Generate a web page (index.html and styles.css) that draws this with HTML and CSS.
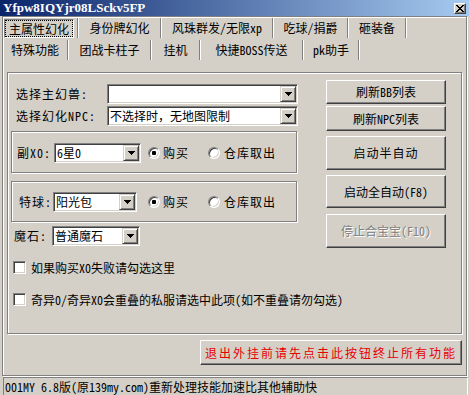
FILE: index.html
```html
<!DOCTYPE html>
<html>
<head>
<meta charset="utf-8">
<link rel="stylesheet" href="styles.css">
</head>
<body>
<div class="win">
  <div class="titlebar">
    <span class="title">Yfpw8IQYjr08LSckv5FP</span>
    <span class="close"><svg width="8" height="7" viewBox="0 0 8 7" shape-rendering="crispEdges"><path d="M0 0h2v1h-2zM6 0h2v1h-2zM1 1h2v1h-2zM5 1h2v1h-2zM2 2h4v1h-4zM3 3h2v1h-2zM2 4h4v1h-4zM1 5h2v1h-2zM5 5h2v1h-2zM0 6h2v1h-2zM6 6h2v1h-2z" fill="#000"/></svg></span>
  </div>
  <div class="frame">
    <div class="tabs">
      <div class="tabrow">
        <div class="tab t74 sel"><span class="pressed"><span class="focus">主属性幻化</span></span></div><i class="sep"></i>
        <div class="tab t81">身份牌幻化</div><i class="sep"></i>
        <div class="tab t110">风珠群发/无限xp</div><i class="sep"></i>
        <div class="tab t73">吃球/捐爵</div><i class="sep"></i>
        <div class="tab t56">砸装备</div><i class="sep"></i>
      </div>
      <div class="tabrow">
        <div class="tab t64">特殊功能</div><i class="sep"></i>
        <div class="tab t81">团战卡柱子</div><i class="sep"></i>
        <div class="tab t47">挂机</div><i class="sep"></i>
        <div class="tab t101">快捷BOSS传送</div><i class="sep"></i>
        <div class="tab t54">pk助手</div><i class="sep"></i>
      </div>
    </div>

    <div class="panel">
      <div class="leftcol">
        <div class="row rowa">
          <span class="lbl la">选择主幻兽:</span>
          <div class="combo cw191"><span class="val"></span><span class="drop"><svg width="7" height="4" viewBox="0 0 7 4" shape-rendering="crispEdges"><path d="M0 0h7v1h-7zM1 1h5v1h-5zM2 2h3v1h-3zM3 3h1v1h-1z" fill="#000"/></svg></span></div>
        </div>
        <div class="row rowb">
          <span class="lbl la">选择幻化NPC:</span>
          <div class="combo cw191"><span class="val">不选择时，无地图限制</span><span class="drop"><svg width="7" height="4" viewBox="0 0 7 4" shape-rendering="crispEdges"><path d="M0 0h7v1h-7zM1 1h5v1h-5zM2 2h3v1h-3zM3 3h1v1h-1z" fill="#000"/></svg></span></div>
        </div>

        <div class="group g1">
          <span class="lbl lx">副X0:</span>
          <div class="combo cw87"><span class="val">6星0</span><span class="drop"><svg width="7" height="4" viewBox="0 0 7 4" shape-rendering="crispEdges"><path d="M0 0h7v1h-7zM1 1h5v1h-5zM2 2h3v1h-3zM3 3h1v1h-1z" fill="#000"/></svg></span></div>
          <div class="radios r1">
            <span class="ritem rfirst"><i class="radio on"></i><span class="rl">购买</span></span>
            <span class="ritem"><i class="radio"></i><span class="rl rl2">仓库取出</span></span>
          </div>
        </div>

        <div class="group g2">
          <span class="lbl lt">特球:</span>
          <div class="combo cw84"><span class="val">阳光包</span><span class="drop"><svg width="7" height="4" viewBox="0 0 7 4" shape-rendering="crispEdges"><path d="M0 0h7v1h-7zM1 1h5v1h-5zM2 2h3v1h-3zM3 3h1v1h-1z" fill="#000"/></svg></span></div>
          <div class="radios r2">
            <span class="ritem rfirst"><i class="radio on"></i><span class="rl">购买</span></span>
            <span class="ritem"><i class="radio"></i><span class="rl rl2">仓库取出</span></span>
          </div>
        </div>

        <div class="row rowm">
          <span class="lbl lm">魔石:</span>
          <div class="combo cw88"><span class="val">普通魔石</span><span class="drop"><svg width="7" height="4" viewBox="0 0 7 4" shape-rendering="crispEdges"><path d="M0 0h7v1h-7zM1 1h5v1h-5zM2 2h3v1h-3zM3 3h1v1h-1z" fill="#000"/></svg></span></div>
        </div>

        <div class="crow c1"><i class="check"></i><span class="cl">如果购买X0失败请勾选这里</span></div>
        <div class="crow c2"><i class="check"></i><span class="cl">奇异0/奇异X0会重叠的私服请选中此项(如不重叠请勿勾选)</span></div>
      </div>

      <div class="rightcol">
        <div class="btn b1">刷新BB列表</div>
        <div class="btn b2">刷新NPC列表</div>
        <div class="btn b3 sp">启动半自动</div>
        <div class="btn b4">启动全自动(F8)</div>
        <div class="btn b5 disabled">停止合宝宝(F10)</div>
      </div>
    </div>

    <div class="btn quit">退出外挂前请先点击此按钮终止所有功能</div>
  </div>
  <div class="status">001MY 6.8版(原139my.com)重新处理技能加速比其他辅助快</div>
</div>
</body>
</html>
```

FILE: styles.css
```css
* { box-sizing: border-box; margin: 0; padding: 0; }
html, body { width: 469px; height: 395px; overflow: hidden; }
body {
  background: #d4d0c8;
  font-family: "Noto Sans Mono CJK SC", "Noto Sans CJK SC", sans-serif;
  font-size: 12px;
  line-height: 16px;
  color: #000;
}
.win { width: 469px; height: 395px; display: flex; flex-direction: column; }

.titlebar {
  height: 16px;
  flex: none;
  background: linear-gradient(to right, #0a246a, #a6caf0);
  display: flex;
  align-items: center;
  justify-content: space-between;
  padding: 0 3px 0 3px;
}
.title {
  font-family: "Liberation Serif", serif;
  font-weight: bold;
  font-size: 13px;
  line-height: 16px;
  color: #fff;
}
.close {
  width: 12px;
  height: 11px;
  margin-top: 1px;
  background: #d4d0c8;
  border: 1px solid;
  border-color: #fff #404040 #404040 #fff;
  box-shadow: inset -1px -1px #808080;
  display: flex;
  align-items: center;
  justify-content: center;
}

.frame {
  flex: none;
  width: 465px;
  height: 360px;
  margin-left: 2px;
  border: 1px solid #808080;
  box-shadow: inset 1px 1px #fff, 1px 1px 0 #fff;
}

.tabs { padding-top: 1px; display: flex; flex-direction: column; gap: 2px; }
.tabrow { display: flex; height: 20px; }
.tab { height: 20px; display: flex; align-items: center; justify-content: center; white-space: nowrap; }
.tab.sel { justify-content: flex-start; align-items: flex-start; }
.pressed {
  margin: 1px 0 0 1px;
  width: 70px;
  height: 19px;
  border: 1px solid;
  border-color: #808080 #fff #fff #808080;
  display: flex;
}
.focus {
  flex: 1;
  border: 1px dotted #000;
  display: flex;
  align-items: center;
  justify-content: center;
}
.sep { display: block; width: 2px; height: 20px; border-left: 1px solid #808080; border-right: 1px solid #fff; }
.t74 { width: 74px; } .t81 { width: 81px; } .t110 { width: 110px; } .t73 { width: 73px; } .t56 { width: 56px; }
.t64 { width: 64px; } .t47 { width: 47px; } .t101 { width: 101px; } .t54 { width: 54px; }

.panel {
  margin: 12px 0 0 4px;
  width: 455px;
  height: 262px;
  border: 1px solid #808080;
  box-shadow: inset 1px 1px #fff, 1px 1px 0 #fff;
  display: flex;
  align-items: flex-start;
  padding: 7px 0 0 3px;
}
.leftcol { width: 287px; margin-top: 4px; display: flex; flex-direction: column; align-items: flex-start; }
.rightcol { margin-left: 28px; display: flex; flex-direction: column; }

.row { display: flex; align-items: center; height: 20px; }
.rowb { margin-top: 2px; }
.lbl { letter-spacing: 1px; white-space: nowrap; }
.la { padding-left: 5px; width: 96px; }
.lx { padding-left: 5px; width: 42px; }
.lt { padding-left: 7px; width: 41px; }
.lm { padding-left: 3px; width: 41px; }

.combo {
  height: 20px;
  background: #fff;
  border: 1px solid;
  border-color: #808080 #fff #fff #808080;
  box-shadow: inset 1px 1px #404040, inset -1px -1px #d4d0c8;
  padding: 1px;
  display: flex;
}
.cw191 { width: 191px; } .cw87 { width: 87px; } .cw84 { width: 84px; } .cw88 { width: 88px; }
.val { flex: 1; padding-left: 1px; white-space: nowrap; overflow: hidden; line-height: 16px; }
.drop {
  width: 16px;
  height: 16px;
  background: #d4d0c8;
  border: 1px solid;
  border-color: #d4d0c8 #404040 #404040 #d4d0c8;
  box-shadow: inset 1px 1px #fff, inset -1px -1px #808080;
  display: flex;
  align-items: center;
  justify-content: center;
}

.group {
  width: 286px;
  border: 1px solid #808080;
  box-shadow: inset 1px 1px #fff, 1px 1px 0 #fff;
  display: flex;
  align-items: center;
  align-self: flex-start;
}
.g1 { margin-top: 5px; height: 42px; padding-top: 1px; }
.g2 { margin-top: 8px; height: 41px; padding-top: 1px; }
.radios { display: flex; align-items: center; }
.r1 { margin-left: 7px; }
.r2 { margin-left: 11px; }
.ritem { display: flex; align-items: center; }
.rfirst { width: 60px; }
.radio {
  display: flex;
  align-items: center;
  justify-content: center;
  width: 12px;
  height: 12px;
  border-radius: 50%;
  background: #fff;
  border: 1px solid;
  border-color: #808080 #fff #fff #808080;
  box-shadow: inset 1px 1px #404040, inset -1px -1px #d4d0c8;
}
.radio.on::after { content: ""; width: 4px; height: 4px; background: #000; border-radius: 1px; }
.rl { margin-left: 3px; letter-spacing: 1px; }
.rl2 { margin-left: 4px; }

.rowm { margin-top: 4px; }

.crow { display: flex; align-items: center; padding-left: 2px; height: 13px; }
.c1 { margin-top: 15px; }
.c2 { margin-top: 19px; }
.check {
  display: block;
  width: 13px;
  height: 13px;
  background: #fff;
  border: 1px solid;
  border-color: #808080 #fff #fff #808080;
  box-shadow: inset 1px 1px #404040, inset -1px -1px #d4d0c8;
}
.cl { margin-left: 5px; white-space: nowrap; }

.btn {
  width: 120px;
  background: #d4d0c8;
  border: 1px solid;
  border-color: #fff #404040 #404040 #fff;
  box-shadow: inset -1px -1px #808080;
  display: flex;
  align-items: center;
  justify-content: center;
  white-space: nowrap;
}
.b1 { height: 24px; }
.b2 { height: 25px; margin-top: 2px; }
.b3 { height: 34px; margin-top: 5px; }
.b4 { height: 33px; margin-top: 5px; }
.b5 { height: 34px; margin-top: 6px; }
.sp { letter-spacing: 1px; }
.disabled { color: #808080; text-shadow: 1px 1px 0 #fff; }

.quit {
  width: 262px;
  height: 25px;
  margin: 6px 0 0 197px;
  color: #e80000;
  letter-spacing: 2px;
}

.status {
  flex: none;
  margin: 1px 1px 0 3px;
  height: 18px;
  border-top: 1px solid #808080;
  border-left: 1px solid #808080;
  border-right: 1px solid #fff;
  padding: 1px 0 0 1px;
  white-space: nowrap;
}
```
